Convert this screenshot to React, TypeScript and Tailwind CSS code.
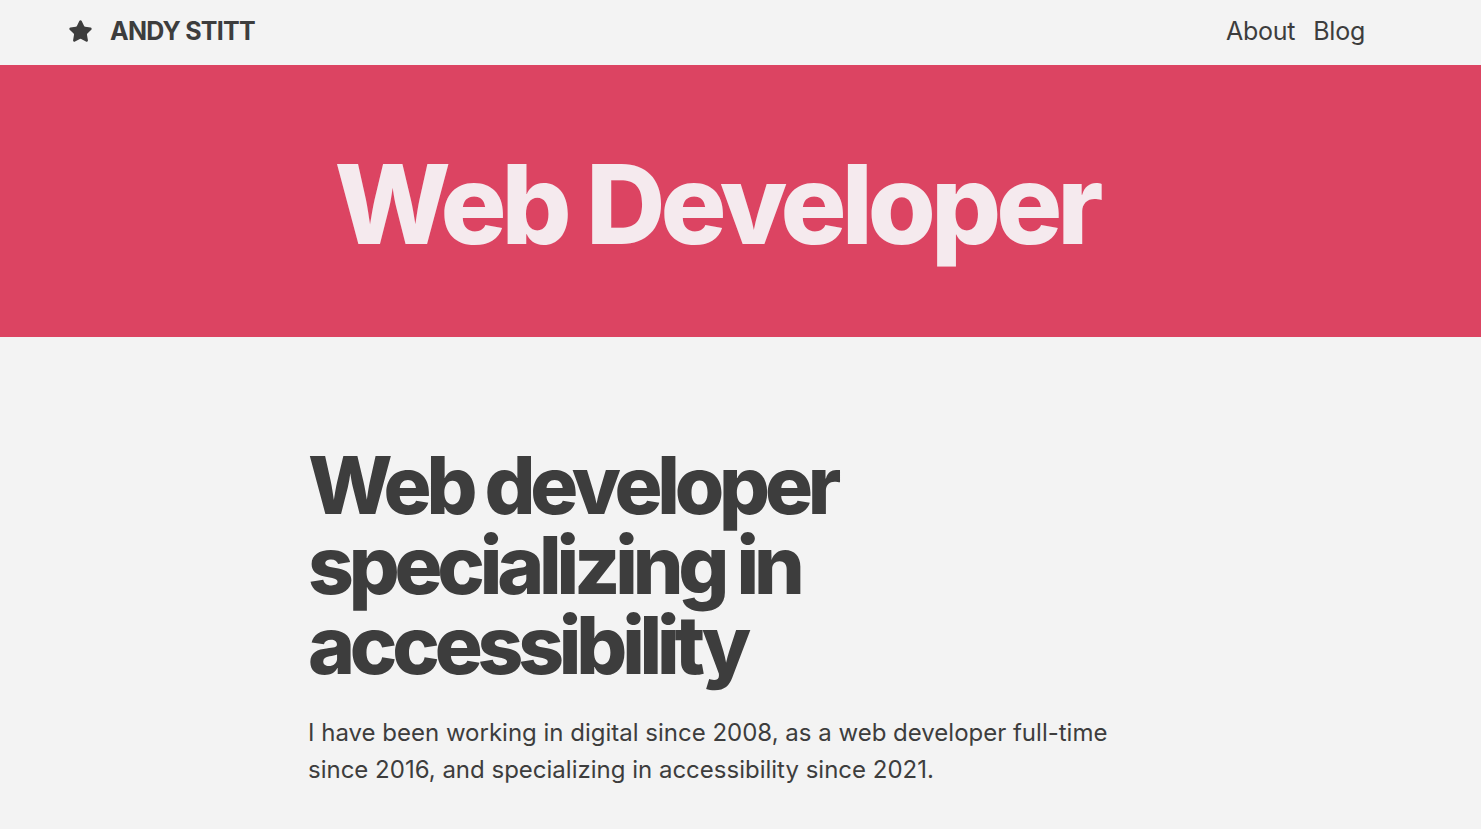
import { Star } from 'lucide-react';

const sans = { fontFamily: 'Inter, "Noto Sans", sans-serif' };

function App() {
  return (
    <div className="min-h-screen bg-[#f3f3f3] text-[#3d3d3d]" style={sans}>
      <header className="h-[65px] flex items-center justify-between pl-[68px] pr-[116px]">
        <a href="#" className="flex items-center gap-[17px] -mt-[2px]">
          <Star className="w-[25px] h-[25px] fill-[#3d3d3d] text-[#3d3d3d]" strokeWidth={1.5} />
          <span className="text-[25px] font-bold tracking-[-0.03em]">ANDY STITT</span>
        </a>
        <nav className="flex items-center gap-[18px] text-[25px] tracking-[-0.01em] -mt-[2px]">
          <a href="#">About</a>
          <a href="#">Blog</a>
        </nav>
      </header>

      <section className="h-[272px] bg-[#dc4462] flex items-center justify-center">
        <h1 className="text-[110px] font-extrabold leading-none tracking-[-0.045em] text-[#f5eaee] -ml-[48px] mt-[5px]">
          Web Developer
        </h1>
      </section>

      <main className="pl-[308px] pr-[300px] pt-[108px]">
        <h2 className="max-w-[600px] text-[80px] font-extrabold leading-[80px] tracking-[-0.065em]">
          Web developer specializing in accessibility
        </h2>
        <p className="mt-[29px] max-w-[830px] text-[24px] leading-[37px]">
          I have been working in digital since 2008, as a web developer full-time since 2016, and specializing in accessibility since 2021.
        </p>
      </main>
    </div>
  );
}

export default App;
